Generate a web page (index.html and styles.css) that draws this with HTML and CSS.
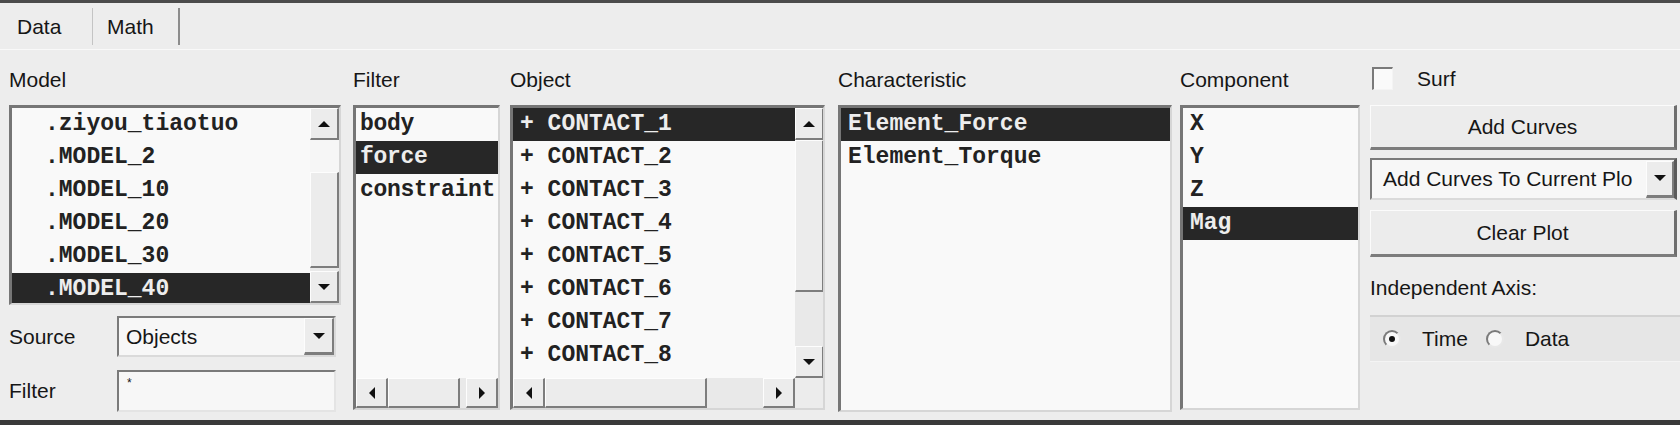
FILE: index.html
```html
<!DOCTYPE html>
<html lang="en">
<head>
    <meta charset="UTF-8">
    <title>Data</title>
    <link rel="stylesheet" href="styles.css">
</head>
<body>
    <div class="window">
        <div class="tabs">
            <div class="tab tab-data">Data</div>
            <div class="tab tab-math">Math</div>
        </div>

        <div class="panel">
            <!-- Model -->
            <div class="col col-model">
                <div class="label">Model</div>
                <div class="listbox listbox-model">
                    <div class="rows rows-indent">
                        <div class="row">.ziyou_tiaotuo</div>
                        <div class="row">.MODEL_2</div>
                        <div class="row">.MODEL_10</div>
                        <div class="row">.MODEL_20</div>
                        <div class="row">.MODEL_30</div>
                        <div class="row selected">.MODEL_40</div>
                    </div>
                    <div class="vscroll">
                        <div class="sbtn sbtn-v"><span class="arrow arrow-up"></span></div>
                        <div class="track model-gap"></div>
                        <div class="thumb model-thumb"></div>
                        <div class="track fill"></div>
                        <div class="sbtn sbtn-v"><span class="arrow arrow-down"></span></div>
                    </div>
                </div>
                <div class="field-row source-row">
                    <span class="field-label">Source</span>
                    <div class="combo">
                        <span class="combo-text">Objects</span>
                        <div class="combo-btn"><span class="arrow arrow-down"></span></div>
                    </div>
                </div>
                <div class="field-row filter-row">
                    <span class="field-label">Filter</span>
                    <div class="textbox">*</div>
                </div>
            </div>

            <!-- Filter -->
            <div class="col col-filter">
                <div class="label">Filter</div>
                <div class="listbox listbox-filter">
                    <div class="rows rows-tight">
                        <div class="row">body</div>
                        <div class="row selected">force</div>
                        <div class="row">constraint</div>
                    </div>
                    <div class="hscroll">
                        <div class="sbtn sbtn-h"><span class="arrow arrow-left"></span></div>
                        <div class="thumb filter-thumb"></div>
                        <div class="track fill"></div>
                        <div class="sbtn sbtn-h"><span class="arrow arrow-right"></span></div>
                    </div>
                </div>
            </div>

            <!-- Object -->
            <div class="col col-object">
                <div class="label">Object</div>
                <div class="listbox listbox-object">
                    <div class="rows">
                        <div class="row selected">+ CONTACT_1</div>
                        <div class="row">+ CONTACT_2</div>
                        <div class="row">+ CONTACT_3</div>
                        <div class="row">+ CONTACT_4</div>
                        <div class="row">+ CONTACT_5</div>
                        <div class="row">+ CONTACT_6</div>
                        <div class="row">+ CONTACT_7</div>
                        <div class="row">+ CONTACT_8</div>
                    </div>
                    <div class="vscroll">
                        <div class="sbtn sbtn-v"><span class="arrow arrow-up"></span></div>
                        <div class="thumb object-thumb"></div>
                        <div class="track fill"></div>
                        <div class="sbtn sbtn-v"><span class="arrow arrow-down"></span></div>
                    </div>
                    <div class="hscroll">
                        <div class="sbtn sbtn-h"><span class="arrow arrow-left"></span></div>
                        <div class="thumb object-hthumb"></div>
                        <div class="track fill"></div>
                        <div class="sbtn sbtn-h"><span class="arrow arrow-right"></span></div>
                    </div>
                    <div class="corner"></div>
                </div>
            </div>

            <!-- Characteristic -->
            <div class="col col-char">
                <div class="label">Characteristic</div>
                <div class="listbox listbox-char">
                    <div class="rows">
                        <div class="row selected">Element_Force</div>
                        <div class="row">Element_Torque</div>
                    </div>
                </div>
            </div>

            <!-- Component -->
            <div class="col col-comp">
                <div class="label">Component</div>
                <div class="listbox listbox-comp">
                    <div class="rows">
                        <div class="row">X</div>
                        <div class="row">Y</div>
                        <div class="row">Z</div>
                        <div class="row selected">Mag</div>
                    </div>
                </div>
            </div>

            <!-- Actions -->
            <div class="col col-actions">
                <div class="check-row">
                    <span class="checkbox"></span>
                    <span class="check-label">Surf</span>
                </div>
                <div class="button btn-add">Add Curves</div>
                <div class="combo combo-wide">
                    <span class="combo-text">Add Curves To Current Plo</span>
                    <div class="combo-btn"><span class="arrow arrow-down"></span></div>
                </div>
                <div class="button btn-clear">Clear Plot</div>
                <div class="axis-label">Independent Axis:</div>
                <div class="radio-group">
                    <span class="radio checked"></span>
                    <span class="radio-label">Time</span>
                    <span class="radio"></span>
                    <span class="radio-label">Data</span>
                </div>
            </div>
        </div>
    </div>
</body>
</html>
```

FILE: styles.css
```css
* {
    box-sizing: border-box;
}
body {
    margin: 0;
    background: #ececec;
    font-family: "Liberation Sans", Arial, sans-serif;
    font-size: 21px;
    color: #161616;
}
.window {
    width: 1680px;
    height: 425px;
    border-top: 3px solid #4c4c4c;
    border-bottom: 5px solid #3a3a3a;
    background: #ededed;
    overflow: hidden;
}

/* tabs */
.tabs {
    height: 47px;
    display: flex;
    padding: 5px 0 0 8px;
    border-bottom: 1px solid #f9f9f9;
}
.tab {
    height: 37px;
    line-height: 37px;
}
.tab-data {
    width: 84px;
    padding-left: 9px;
}
.tab-math {
    width: 88px;
    padding-left: 14px;
    border-left: 1px solid #c4c4c4;
    border-right: 2px solid #8c8c8c;
}

/* columns */
.panel {
    display: flex;
    padding-left: 9px;
    height: 370px;
}
.col {
    display: flex;
    flex-direction: column;
}
.col-model { width: 332px; }
.col-filter { width: 147px; margin-left: 12px; }
.col-object { width: 315px; margin-left: 10px; }
.col-char { width: 334px; margin-left: 13px; }
.col-comp { width: 180px; margin-left: 8px; }
.col-actions { width: 307px; margin-left: 10px; }

.label {
    height: 55px;
    padding-top: 18px;
    line-height: 24px;
}

/* list boxes */
.listbox {
    background: #f9f9f9;
    border-top: 3px solid #767676;
    border-left: 3px solid #767676;
    border-right: 2px solid #d6d6d6;
    border-bottom: 2px solid #d6d6d6;
    overflow: hidden;
}
.listbox-model {
    height: 200px;
    display: flex;
}
.listbox-filter {
    height: 305px;
    display: flex;
    flex-direction: column;
}
.listbox-object {
    height: 305px;
    display: grid;
    grid-template-columns: 1fr 28px;
    grid-template-rows: 1fr 30px;
}
.listbox-char {
    height: 307px;
}
.listbox-comp {
    height: 305px;
}
.rows {
    flex: 1;
    min-width: 0;
    overflow: hidden;
}
.row {
    height: 33px;
    line-height: 33px;
    padding-left: 7px;
    font-family: "Liberation Mono", "Courier New", monospace;
    font-weight: bold;
    font-size: 23px;
    color: #222;
    white-space: nowrap;
}
.rows-indent .row {
    padding-left: 33px;
}
.rows-tight .row {
    padding-left: 4px;
    letter-spacing: -0.3px;
}
.row.selected {
    background: #272727;
    color: #ededed;
}

/* scrollbars */
.vscroll {
    width: 29px;
    display: flex;
    flex-direction: column;
    background: #e9e9e9;
}
.hscroll {
    height: 30px;
    display: flex;
    background: #e9e9e9;
}
.sbtn,
.thumb {
    background: #ececec;
    border-top: 1px solid #fdfdfd;
    border-left: 1px solid #fdfdfd;
    border-right: 2px solid #7d7d7d;
    border-bottom: 2px solid #7d7d7d;
}
.sbtn {
    display: flex;
    align-items: center;
    justify-content: center;
    flex: none;
}
.sbtn-v { height: 32px; }
.sbtn-h { width: 32px; }
.track.fill { flex: 1; }
.model-gap {
    height: 32px;
    background: #f6f6f6;
}
.model-thumb { height: 96px; }
.object-thumb { height: 152px; }
.filter-thumb { width: 72px; }
.object-hthumb { width: 162px; }
.corner {
    background: #ececec;
}

.arrow {
    width: 0;
    height: 0;
    display: block;
}
.arrow-up {
    border-left: 6px solid transparent;
    border-right: 6px solid transparent;
    border-bottom: 6px solid #111;
}
.arrow-down {
    border-left: 6px solid transparent;
    border-right: 6px solid transparent;
    border-top: 6px solid #111;
}
.arrow-left {
    border-top: 6px solid transparent;
    border-bottom: 6px solid transparent;
    border-right: 6px solid #111;
}
.arrow-right {
    border-top: 6px solid transparent;
    border-bottom: 6px solid transparent;
    border-left: 6px solid #111;
}

/* source / filter fields */
.field-row {
    display: flex;
    align-items: center;
}
.source-row {
    margin-top: 11px;
}
.filter-row {
    margin-top: 13px;
}
.field-label {
    width: 108px;
}
.combo {
    width: 219px;
    height: 41px;
    display: flex;
    align-items: center;
    background: #f7f7f7;
    border-top: 2px solid #7a7a7a;
    border-left: 2px solid #7a7a7a;
    border-right: 2px solid #dadada;
    border-bottom: 2px solid #dadada;
}
.combo-text {
    flex: 1;
    padding-left: 7px;
    white-space: nowrap;
    overflow: hidden;
}
.combo-btn {
    width: 30px;
    height: 37px;
    display: flex;
    align-items: center;
    justify-content: center;
    background: #ececec;
    border-top: 1px solid #fdfdfd;
    border-left: 1px solid #fdfdfd;
    border-right: 2px solid #7d7d7d;
    border-bottom: 3px solid #7d7d7d;
}
.textbox {
    width: 219px;
    height: 42px;
    padding: 4px 0 0 8px;
    font-size: 12px;
    background: #f7f7f7;
    border-top: 2px solid #7a7a7a;
    border-left: 2px solid #7a7a7a;
    border-right: 2px solid #e4e4e4;
    border-bottom: 2px solid #e4e4e4;
}

/* right-hand actions */
.check-row {
    height: 55px;
    padding-top: 17px;
    display: flex;
    align-items: flex-start;
}
.checkbox {
    width: 21px;
    height: 23px;
    margin-left: 2px;
    background: #fafafa;
    border-top: 2px solid #7a7a7a;
    border-left: 2px solid #7a7a7a;
    border-right: 1px solid #f4f4f4;
    border-bottom: 1px solid #f4f4f4;
}
.check-label {
    margin-left: 24px;
    line-height: 24px;
}
.button {
    width: 307px;
    display: flex;
    align-items: center;
    justify-content: center;
    background: #ececec;
    border-top: 1px solid #fbfbfb;
    border-left: 1px solid #fbfbfb;
    border-right: 3px solid #6e6e6e;
    border-bottom: 3px solid #7c7c7c;
}
.btn-add {
    height: 45px;
}
.btn-clear {
    height: 47px;
    margin-top: 10px;
}
.combo-wide {
    width: 307px;
    height: 42px;
    margin-top: 8px;
    border-right-color: #5a5a5a;
    border-right-width: 3px;
}
.combo-wide .combo-text {
    padding-left: 11px;
}
.combo-wide .combo-btn {
    width: 28px;
}
.axis-label {
    margin-top: 19px;
    line-height: 24px;
}
.radio-group {
    width: 320px;
    height: 47px;
    margin-top: 15px;
    display: flex;
    align-items: center;
    padding-left: 13px;
    background: #e6e6e6;
    border-top: 2px solid #d2d2d2;
    border-bottom: 1px solid #f4f4f4;
}
.radio {
    width: 18px;
    height: 18px;
    border-radius: 50%;
    border: 2px solid;
    border-color: #7a7a7a #e8e8e8 #e8e8e8 #7a7a7a;
    background: #f8f8f8;
    display: flex;
    align-items: center;
    justify-content: center;
    margin-right: 21px;
}
.radio.checked::after {
    content: "";
    width: 6px;
    height: 6px;
    border-radius: 50%;
    background: #111;
}
.radio-label {
    margin-right: 18px;
}
```
